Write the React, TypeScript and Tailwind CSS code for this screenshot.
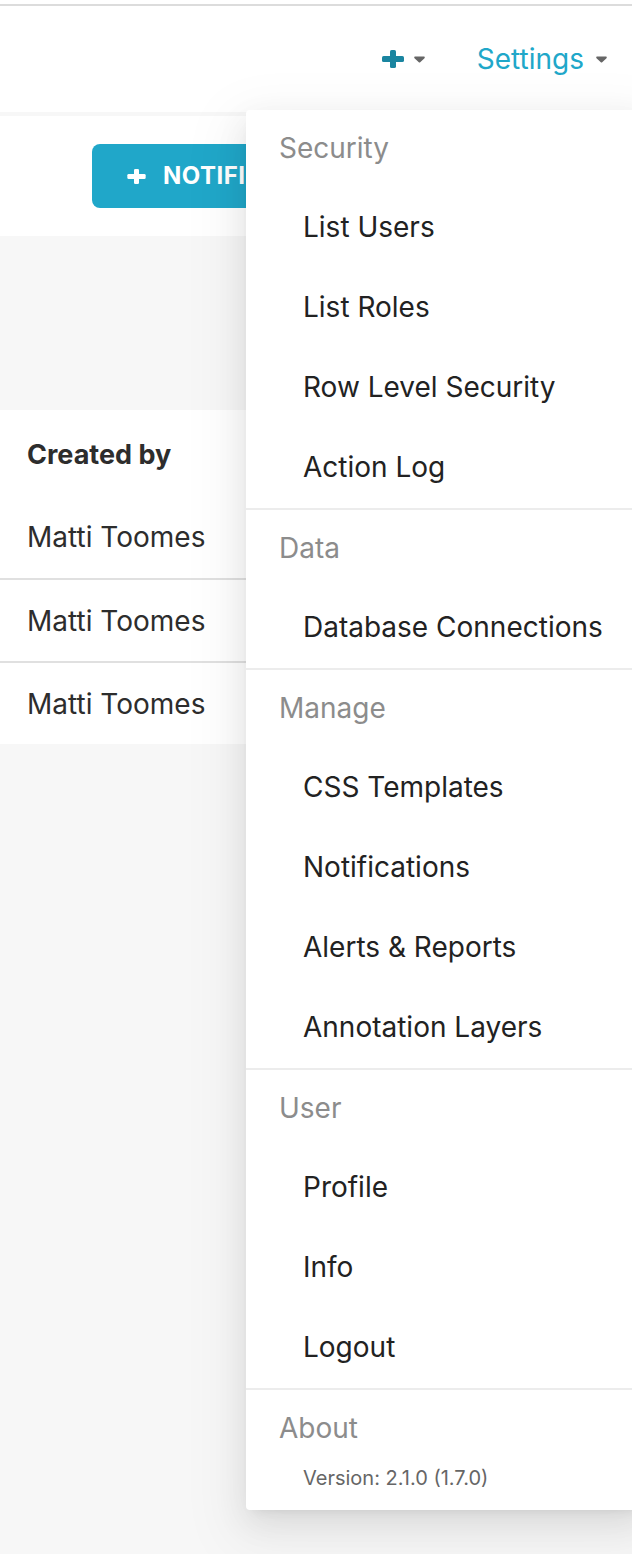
import React from "react";

const Caret = () => (
  <svg width="11" height="7" viewBox="0 0 11 7" fill="none">
    <path
      d="M1.2 0.6h8.6c0.9 0 1.3 1 0.7 1.6L6.2 6.2c-0.4 0.4-1 0.4-1.4 0L0.5 2.2C-0.1 1.6 0.3 0.6 1.2 0.6Z"
      fill="#666666"
    />
  </svg>
);

const ThickPlus = ({ color, size }: { color: string; size: number }) => (
  <svg width={size} height={size - 4} viewBox="0 0 22 18" fill="none">
    <rect x="8" y="0" width="6" height="18" rx="1.6" fill={color} />
    <rect x="0" y="6" width="22" height="6" rx="1.6" fill={color} />
  </svg>
);

type Section = { title: string; items: string[] };

const sections: Section[] = [
  {
    title: "Security",
    items: ["List Users", "List Roles", "Row Level Security", "Action Log"],
  },
  { title: "Data", items: ["Database Connections"] },
  {
    title: "Manage",
    items: [
      "CSS Templates",
      "Notifications",
      "Alerts & Reports",
      "Annotation Layers",
    ],
  },
  { title: "User", items: ["Profile", "Info", "Logout"] },
];

const rows = ["Matti Toomes", "Matti Toomes", "Matti Toomes"];

const SettingsMenu = () => (
  <div className="absolute left-[246px] top-[110px] w-[400px] rounded-[4px] bg-white shadow-[0_12px_32px_0_rgba(0,0,0,0.08),0_6px_12px_-8px_rgba(0,0,0,0.12),0_18px_56px_16px_rgba(0,0,0,0.05)]">
    {sections.map((s) => (
      <div key={s.title} className="border-b-2 border-[#ececec]">
        <div className="h-[78px] pl-[33px] pb-[2px] flex items-center text-[28px] text-[#8c8c8c]">
          {s.title}
        </div>
        {s.items.map((item) => (
          <div
            key={item}
            className="h-[80px] pl-[57px] pb-[3px] flex items-center text-[28px] text-[#222222]"
          >
            {item}
          </div>
        ))}
      </div>
    ))}
    <div className="pt-[16px] pb-[8px] pl-[33px] leading-[44px] text-[28px] text-[#8c8c8c]">
      About
    </div>
    <div className="pl-[57px] pb-[12px] leading-[40px] text-[20px] text-[#666666]">
      Version: 2.1.0 (1.7.0)
    </div>
  </div>
);

export default function App() {
  return (
    <div className="relative w-[632px] h-[1554px] overflow-hidden bg-[#f7f7f7] font-['Inter','Liberation_Sans',sans-serif]">
      <div className="h-[4px] bg-white" />
      <div className="h-[2px] bg-[#dcdcdc]" />
      <header className="h-[106px] bg-white flex items-center justify-end pr-[25px]">
        <div className="flex items-center gap-[10px]">
          <ThickPlus color="#1a85a0" size={22} />
          <Caret />
        </div>
        <div className="ml-[52px] flex items-center gap-[12px]">
          <span className="text-[28px] text-[#20a7c9]">Settings</span>
          <Caret />
        </div>
      </header>
      <div className="h-[4px]" />
      <div className="h-[120px] bg-white flex items-center pl-[92px]">
        <button className="h-[64px] rounded-[8px] bg-[#20a7c9] pl-[35px] pr-[40px] flex items-center gap-[17px] text-white text-[24px] font-bold uppercase tracking-[0.5px]">
          <ThickPlus color="#ffffff" size={19} />
          Notification
        </button>
      </div>
      <div className="h-[174px]" />
      <div className="bg-white">
        <div className="h-[86px] pl-[27px] pt-[4px] flex items-center text-[27px] font-bold text-[#2d2d2d]">
          Created by
        </div>
        {rows.map((r, i) => (
          <div
            key={i}
            className={
              i === 0
                ? "h-[82px] pl-[27px] flex items-center text-[28px] text-[#2d2d2d]"
                : "h-[83px] pl-[27px] border-t-2 border-[#e0e0e0] flex items-center text-[28px] text-[#2d2d2d]"
            }
          >
            {r}
          </div>
        ))}
      </div>
      <SettingsMenu />
    </div>
  );
}
